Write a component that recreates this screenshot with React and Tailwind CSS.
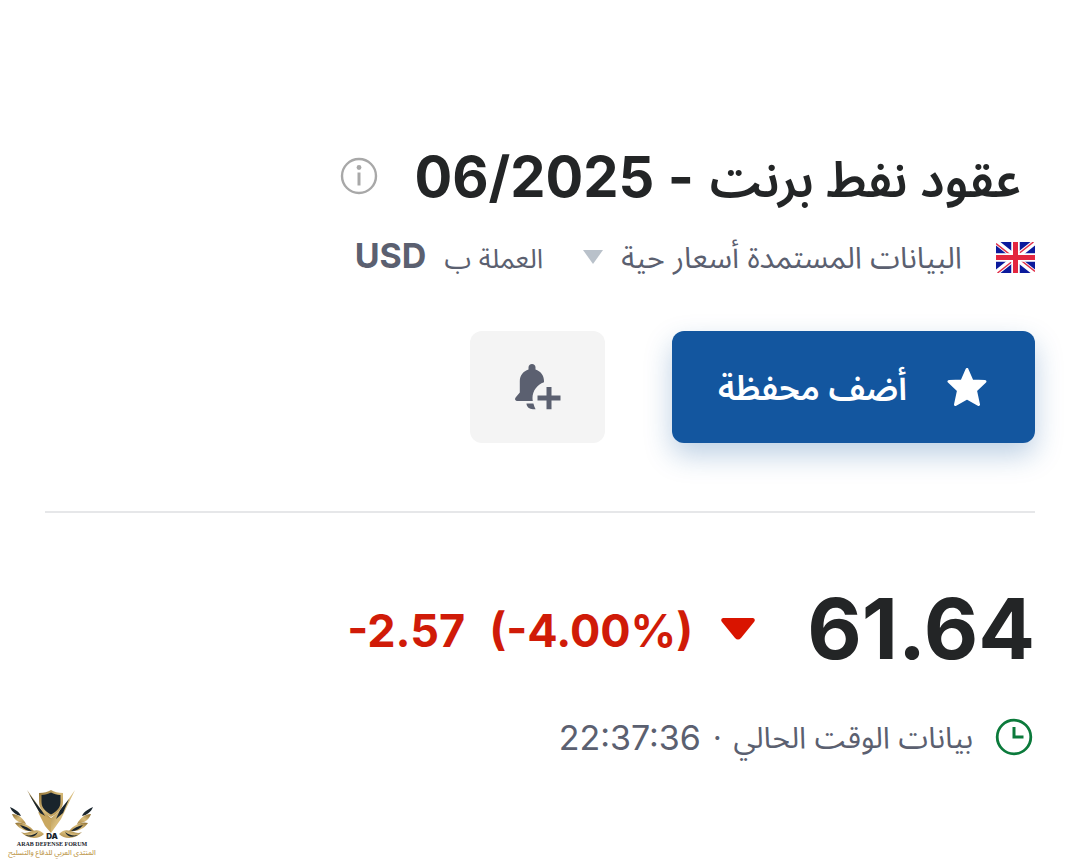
function InfoIcon() {
  return (
    <svg viewBox="0 0 38 38" className="size-[38px]" fill="none" aria-hidden="true">
      <circle cx="19" cy="19" r="17" stroke="#a8a8a8" strokeWidth="2.4" />
      <circle cx="19" cy="10.5" r="2.4" fill="#a8a8a8" />
      <path d="M19 15.500V28.500" stroke="#a8a8a8" strokeWidth="3" />
    </svg>
  );
}

function FlagUK() {
  return (
    <svg viewBox="0 0 39 31" className="h-[31px] w-[39px] shrink-0" role="img" aria-label="المملكة المتحدة">
      <rect width="39" height="31" fill="#0b1a9c" />
      <path d="M0 0L39 31M39 0L0 31" stroke="#fff" strokeWidth="5.5" />
      <path d="M0 1.500L17 15M39 29.500L22 16M37.500 0L21 13M1.500 31L18 18" stroke="#e0304a" strokeWidth="1.5" />
      <path d="M19.500 0V31M0 15.500H39" stroke="#fff" strokeWidth="8.5" />
      <path d="M19.500 0V31M0 15.500H39" stroke="#e3263f" strokeWidth="5" />
    </svg>
  );
}

function BellPlusIcon() {
  return (
    <svg viewBox="0 0 46 46" className="h-[46px] w-[46px]" fill="#5b6070" aria-hidden="true">
      <path d="M17 0C19 0 20.500 1.500 20.500 3.500V5.500C25.500 7 29 11.500 29 17V18.200C22 20.500 17.500 27 17.500 34C17.500 35 17.600 36 17.800 37H2C0 37 -.6 34.800 .8 33.300L4.800 28.500V17C4.800 11.500 8.500 7 13.500 5.500V3.500C13.500 1.500 15 0 17 0Z" />
      <path d="M11.500 39.500H18.400C18.900 41.500 19.700 43.500 20.600 45.200H18C14.500 45.200 11.500 43 11.500 39.500Z" />
      <path d="M31.500 23H36.500V31.500H45.500V36.500H36.500V45.200H31.500V36.500H22.500V31.500H31.500Z" />
    </svg>
  );
}

function StarIcon() {
  return (
    <svg viewBox="0 0 40 40" className="size-10 shrink-0" fill="#fff" stroke="#fff" strokeWidth="3" strokeLinejoin="round" aria-hidden="true">
      <path d="M20 2.500L25 14L38 14.500L28.500 23.500L31.500 37.500L20 31L8.500 37.500L11.500 23.500L2 14.500L15 14Z" />
    </svg>
  );
}

function ClockIcon() {
  return (
    <svg viewBox="0 0 38 38" className="size-[38px] shrink-0" fill="none" stroke="#0b7a3b" aria-hidden="true">
      <circle cx="19" cy="19" r="16.800" strokeWidth="2.800" />
      <path d="M19 9V19H28.500" strokeWidth="3" />
    </svg>
  );
}

function Wing() {
  return (
    <>
      <path d="M1 17C5 19 10 21 12 26C7 25 3 22 1 17Z" fill="#19242c" />
      <path d="M3 24C9 24 14 28 17 34C10 33 5 30 3 24Z" fill="url(#gold)" />
      <path d="M6 33C13 31 20 35 25 41C17 42 10 39 6 33Z" fill="url(#gold)" />
      <path d="M11 35C16 36 20 38 23 41C18 41 14 39 11 35Z" fill="#19242c" />
      <path d="M12 42C20 46 26 35 35 44C29 50 18 49 12 42Z" fill="url(#gold)" />
      <path d="M16 45C21 46 25 45 29 42C27 47 21 48 16 45Z" fill="#19242c" />
    </>
  );
}

function ForumLogo() {
  return (
    <figure dir="ltr" className="flex w-[88px] flex-col items-center">
      <svg viewBox="0 0 86 50" className="h-[50px] w-[86px]" aria-hidden="true">
        <defs>
          <linearGradient id="gold" x1="0" y1="0" x2="1" y2="1">
            <stop offset="0" stopColor="#8a6a2c" />
            <stop offset=".5" stopColor="#d9bd7c" />
            <stop offset="1" stopColor="#a98643" />
          </linearGradient>
        </defs>
        <path d="M18 0L31 18L42 28V36L34 29Z" fill="url(#gold)" />
        <path d="M20 4L33 21L38 29L33 27Z" fill="#19242c" />
        <path d="M66 0L52 29L42 43V28L52 20Z" fill="url(#gold)" />
        <path d="M29 22L42 29V43L36 36Z" fill="#c9a75f" />
        <path d="M60 9L54 23L47 29L51 20Z" fill="#19242c" />
        <path d="M30 3C35 3 39 2 42 0C45 2 49 3 54 3V12C54 19 48 24 42 27C36 24 30 19 30 12Z" fill="url(#gold)" />
        <path d="M32.500 5C36 5 39 4 42 2.500C45 4 48 5 51.500 5V12C51.500 18 47 22 42 24.500C37 22 32.500 18 32.500 12Z" fill="#19242c" />
        <Wing />
        <g transform="translate(85 0) scale(-1 1)">
          <Wing />
        </g>
        <text x="43" y="49" textAnchor="middle" fontFamily="Inter, sans-serif" fontSize="8" fontWeight="900" fill="#19242c">DA</text>
      </svg>
      <figcaption className="flex flex-col items-center whitespace-nowrap">
        <span className="font-['Liberation_Serif',serif] text-[6px] leading-[8px] font-bold text-[#19242c]">ARAB DEFENSE FORUM</span>
        <span dir="rtl" className="text-[7px] leading-[10px] font-medium text-[#c09a4f]">المنتدى العربي للدفاع والتسليح</span>
      </figcaption>
    </figure>
  );
}

export default function App() {
  return (
    <div dir="rtl" lang="ar" className="flex min-h-screen flex-col bg-white font-[Inter,'Noto_Sans_Arabic','Noto_Sans','DejaVu_Sans',sans-serif] text-[#5b6070]">
      <main className="flex flex-col px-[45px] pt-[142px]">
        <header>
          <div className="flex h-[72px] items-center gap-9 ps-[14px]">
            <h1 className="flex items-baseline gap-4 text-[56px] leading-[72px] font-bold whitespace-nowrap text-[#232526]">
              <span className="text-[49px] font-semibold">عقود نفط برنت</span>
              <span>- 06/2025</span>
            </h1>
            <button type="button" aria-label="معلومات" className="mb-1">
              <InfoIcon />
            </button>
          </div>
          <div className="mt-[19px] flex h-12 items-center whitespace-nowrap">
            <FlagUK />
            <button type="button" className="ms-[34px] flex items-center gap-[18px] text-[30px]">
              البيانات المستمدة أسعار حية
              <svg viewBox="0 0 20 14" className="h-[14px] w-5" fill="#b9c1ca" aria-hidden="true">
                <path d="M0 0H20L10 14Z" />
              </svg>
            </button>
            <p className="ms-10 flex items-baseline gap-[18px] text-[27px] leading-9">
              العملة ب
              <b className="text-[34px]">USD</b>
            </p>
          </div>
        </header>

        <div className="mt-[50px] flex gap-[67px]">
          <button
            type="button"
            className="flex h-28 w-[363px] items-center justify-center gap-10 rounded-xl bg-[#13569f] ps-[2px] text-[34px] font-semibold whitespace-nowrap text-white shadow-[0_12px_28px_rgba(19,86,159,0.28)]"
          >
            <StarIcon />
            أضف محفظة
          </button>
          <button type="button" aria-label="إنشاء تنبيه" className="flex h-28 w-[135px] items-center justify-center rounded-xl bg-[#f4f4f4]">
            <BellPlusIcon />
          </button>
        </div>

        <hr className="mt-[68px] border-t-2 border-[#e6e7e9]" />

        <section>
          <div className="mt-16 flex items-center font-bold">
            <span className="text-[84px] leading-[104px] text-[#232526]">61.64</span>
            <svg viewBox="0 0 34 22" className="ms-[52px] h-[22px] w-[34px]" fill="#d91400" aria-hidden="true">
              <path d="M2 0H32Q35 1 33 4L20 20Q17 23 14 20L1 4Q-1 1 2 0Z" />
            </svg>
            <div dir="ltr" className="me-7 flex gap-6 pt-1 text-[45px] leading-[56px] text-[#d01b08]">
              <span>-2.57</span>
              <span>(-4.00%)</span>
            </div>
          </div>
          <div className="mt-8 flex h-12 items-center ps-[2px] whitespace-nowrap">
            <ClockIcon />
            <p className="ms-[22px] flex items-center gap-3 text-[30px]">
              <span>بيانات الوقت الحالي</span>
              <span>·</span>
              <time className="text-[34px]">22:37:36</time>
            </p>
          </div>
        </section>
      </main>
      <footer dir="ltr" className="mt-auto flex px-2 pb-[2px]">
        <ForumLogo />
      </footer>
    </div>
  );
}
